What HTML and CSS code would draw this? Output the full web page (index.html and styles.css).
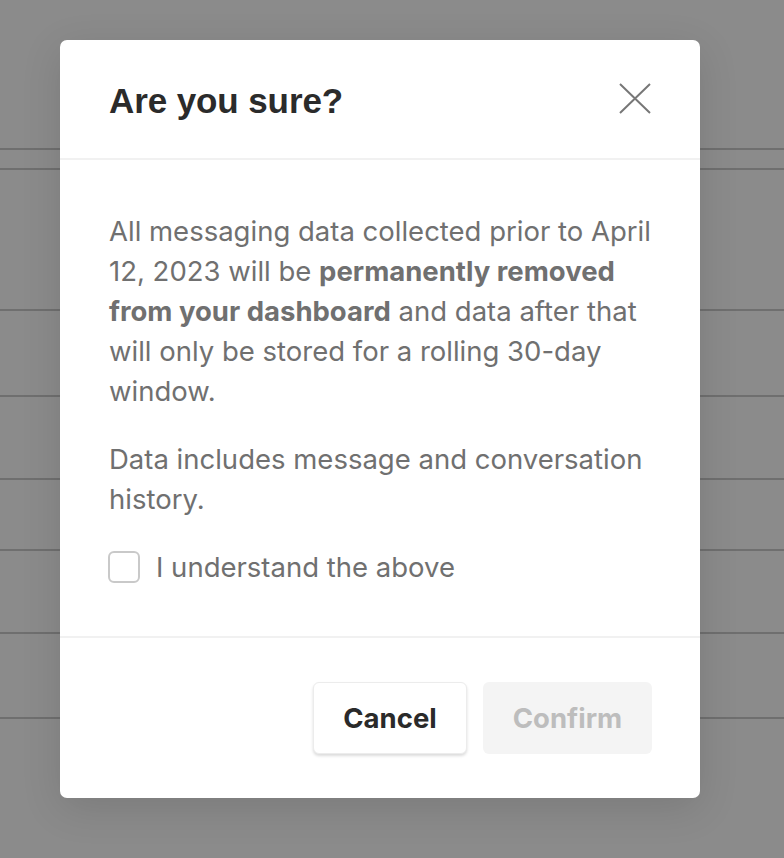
FILE: index.html
```
<!DOCTYPE html>
<html lang="en">
<head>
<meta charset="utf-8">
<title>Are you sure?</title>
<link rel="stylesheet" href="styles.css">
</head>
<body>
<div class="backdrop">
  <div class="rows">
    <div class="row r1"></div>
    <div class="row r2"></div>
    <div class="row r3"></div>
    <div class="row r4"></div>
    <div class="row r5"></div>
    <div class="row r6"></div>
    <div class="row r7"></div>
    <div class="row r8"></div>
  </div>
  <div class="modal">
    <div class="modal-header">
      <h2 class="title">Are you sure?</h2>
      <button class="close" aria-label="Close">
        <svg width="32" height="32" viewBox="0 0 32 32"><path d="M1 2 L31 31 M31 2 L1 31" stroke="#777" stroke-width="2" fill="none"/></svg>
      </button>
    </div>
    <div class="modal-body">
      <p class="text">All messaging data collected prior to April 12, 2023 will be <strong>permanently removed from your dashboard</strong> and data after that will only be stored for a rolling 30-day window.</p>
      <p class="text">Data includes message and conversation history.</p>
      <label class="check">
        <span class="box"></span>
        <span class="check-label">I understand the above</span>
      </label>
    </div>
    <div class="modal-footer">
      <button class="btn btn-cancel">Cancel</button>
      <button class="btn btn-confirm" disabled>Confirm</button>
    </div>
  </div>
</div>
</body>
</html>
```
FILE: styles.css
```
html, body {
  margin: 0;
  padding: 0;
}
body {
  width: 784px;
  height: 858px;
  overflow: hidden;
  background: #8b8b8b;
  font-family: Inter, "Noto Sans", sans-serif;
}
.backdrop {
  position: relative;
  width: 784px;
  height: 858px;
  background: #8b8b8b;
}
.rows {
  position: absolute;
  inset: 0;
}
.row {
  position: absolute;
  left: 0;
  right: 0;
  height: 2px;
  background: #6f6f6f;
}
.r1 { top: 148px; }
.r2 { top: 168px; }
.r3 { top: 309px; }
.r4 { top: 395px; }
.r5 { top: 478px; }
.r6 { top: 549px; }
.r7 { top: 632px; }
.r8 { top: 717px; }
.modal {
  position: absolute;
  left: 60px;
  top: 40px;
  width: 640px;
  height: 758px;
  background: #fff;
  border-radius: 7px;
  box-shadow: 0 10px 40px rgba(0,0,0,0.12);
  display: flex;
  flex-direction: column;
}
.modal-header {
  height: 120px;
  box-sizing: border-box;
  padding: 0 48px 0 49px;
  display: flex;
  align-items: center;
  justify-content: space-between;
  border-bottom: 2px solid #f1f1f1;
}
.title {
  margin: 0;
  font-family: "Liberation Sans", Arial, sans-serif;
  font-weight: 700;
  font-size: 35px;
  color: #2b2b2b;
  letter-spacing: -0.1px;
  padding-top: 3px;
}
.close {
  border: 0;
  background: none;
  padding: 0;
  width: 32px;
  height: 32px;
  margin-right: 1px;
  margin-top: -3px;
  display: flex;
}
.modal-body {
  flex: 1;
  padding: 51px 48px 0 49px;
  border-bottom: 2px solid #f1f1f1;
}
.text {
  margin: 0 0 28px;
  font-size: 27.5px;
  line-height: 40px;
  color: #707070;
}
.text strong {
  font-weight: 700;
  color: #707070;
}
.check {
  display: flex;
  align-items: center;
  gap: 16px;
  height: 40px;
  margin-top: 27px;
}
.box {
  width: 28px;
  height: 28px;
  border: 2px solid #c9c9c9;
  border-radius: 6px;
  margin-left: -1px;
}
.check-label {
  font-size: 27.5px;
  color: #707070;
}
.modal-footer {
  height: 160px;
  box-sizing: border-box;
  padding: 0 48px;
  display: flex;
  align-items: center;
  justify-content: flex-end;
  gap: 16px;
}
.btn {
  height: 72px;
  border-radius: 6px;
  font-family: Inter, "Noto Sans", sans-serif;
  font-weight: 700;
  font-size: 27.5px;
  padding: 0;
}
.btn-cancel {
  width: 154px;
  background: #fff;
  border: 1px solid #ececec;
  color: #2a2a2a;
  box-shadow: 0 2px 3px rgba(0,0,0,0.14);
}
.btn-confirm {
  width: 169px;
  background: #f4f4f4;
  border: 0;
  color: #bdbdbd;
}
```
